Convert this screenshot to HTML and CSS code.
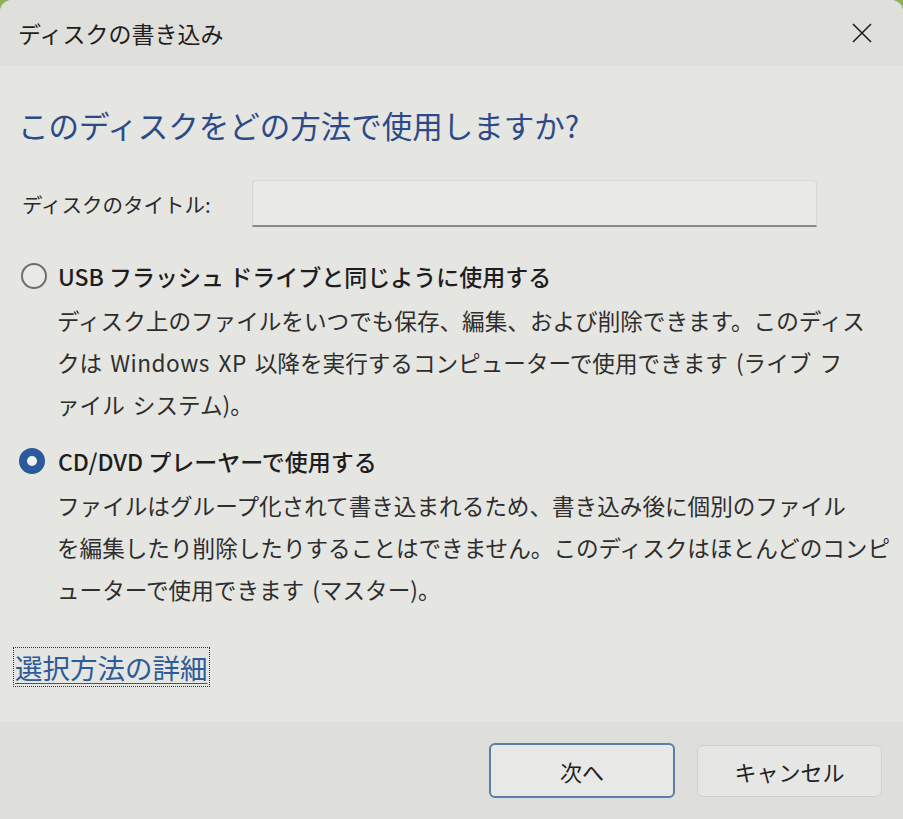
FILE: index.html
```html
<!DOCTYPE html>
<html lang="ja">
<head>
<meta charset="utf-8">
<title>ディスクの書き込み</title>
<link rel="stylesheet" href="styles.css">
</head>
<body>
<div class="window">
  <header class="titlebar">
    <span class="title">ディスクの書き込み</span>
    <span class="close" aria-label="閉じる">
      <svg width="22" height="22" viewBox="0 0 22 22"><path d="M2 2 L20 20 M20 2 L2 20" stroke="#1f1f1f" stroke-width="1.6" fill="none"/></svg>
    </span>
  </header>
  <main class="content">
    <h1 class="instruction">このディスクをどの方法で使用しますか?</h1>
    <div class="title-row">
      <label class="title-label">ディスクのタイトル:</label>
      <div class="title-input"></div>
    </div>
    <div class="option option-first">
      <span class="radio"></span>
      <div class="option-label">USB フラッシュ ドライブと同じように使用する</div>
      <p class="option-desc">ディスク上のファイルをいつでも保存、編集、および削除できます。このディス<br>クは <span class="latin">Windows XP</span> 以降を実行するコンピューターで使用できます (ライブ フ<br>ァイル システム)。</p>
    </div>
    <div class="option option-second">
      <span class="radio radio-checked"></span>
      <div class="option-label">CD/DVD プレーヤーで使用する</div>
      <p class="option-desc">ファイルはグループ化されて書き込まれるため、書き込み後に個別のファイル<br>を編集したり削除したりすることはできません。このディスクはほとんどのコンピ<br>ューターで使用できます (マスター)。</p>
    </div>
    <div class="link-row"><a class="more-link">選択方法の詳細</a></div>
  </main>
  <footer class="footer">
    <span class="btn btn-primary">次へ</span>
    <span class="btn">キャンセル</span>
  </footer>
</div>
</body>
</html>
```

FILE: styles.css
```css
html, body {
  margin: 0;
  padding: 0;
}
body {
  background: #8fae5e;
  font-family: "Noto Sans CJK JP", "Noto Sans", sans-serif;
  color: #262626;
}
.window {
  width: 903px;
  height: 819px;
  display: flex;
  flex-direction: column;
  background: #e5e5e2;
  border-radius: 12px 12px 0 0;
  overflow: hidden;
}
.titlebar {
  height: 66px;
  flex: none;
  display: flex;
  align-items: center;
  justify-content: space-between;
  padding: 0 30px 0 18px;
  background: #dfdfdb;
}
.title {
  font-size: 23px;
  line-height: 30px;
  color: #1f1f1f;
}
.close {
  display: flex;
  width: 22px;
  height: 22px;
}
.content {
  flex: 1;
  padding: 0 18px 0 18px;
}
.instruction {
  margin: 39px 0 0 0;
  font-size: 30.5px;
  line-height: 40px;
  font-weight: normal;
  color: #2c4a88;
}
.title-row {
  margin-top: 35px;
  display: flex;
  align-items: center;
  gap: 34px;
  padding-left: 4px;
}
.title-label {
  font-size: 20.5px;
  line-height: 46px;
  width: 196px;
  color: #2a2a2a;
}
.title-input {
  width: 563px;
  height: 44px;
  background: #e9e9e7;
  border: 1px solid #d6d6d2;
  border-bottom: 2px solid #8a8a88;
  border-radius: 4px 4px 0 0;
}
.option {
  display: grid;
  grid-template-columns: 26px 1fr;
  column-gap: 11px;
  padding-left: 3px;
}
.option-first { margin-top: 28px; }
.option-second { margin-top: 14px; }
.radio {
  grid-row: 1;
  grid-column: 1;
  align-self: center;
  width: 26px;
  height: 26px;
  box-sizing: border-box;
  border-radius: 50%;
  border: 2px solid #6e6e6c;
  background: #e9e9e7;
}
.radio-checked {
  border: 8px solid #2b5a9b;
  background: #f2f2f0;
  margin-left: -2px;
}
.option-label {
  grid-row: 1;
  grid-column: 2;
  font-size: 23px;
  line-height: 42px;
  font-weight: 500;
  color: #1e1e1e;
}
.option-desc {
  grid-row: 2;
  grid-column: 2;
  margin: 3px 0 0 -1px;
  font-size: 22.6px;
  line-height: 42px;
  color: #2e2e2e;
  white-space: nowrap;
  word-spacing: 3px;
}
.latin {
  letter-spacing: 0.5px;
}
.link-row {
  margin-top: 37px;
}
.more-link {
  display: inline-block;
  margin-left: -4px;
  font-size: 27.5px;
  line-height: 38px;
  color: #2d5a98;
  text-decoration: underline;
  text-decoration-thickness: 1px;
  text-underline-offset: 4px;
  outline: 1px dotted #333;
  padding: 0 1px;
}
.footer {
  height: 97px;
  flex: none;
  display: flex;
  align-items: center;
  justify-content: flex-end;
  gap: 22px;
  padding-right: 21px;
  background: #dededb;
}
.btn {
  width: 185px;
  height: 52px;
  box-sizing: border-box;
  display: flex;
  align-items: center;
  justify-content: center;
  font-size: 22px;
  color: #222;
  background: #e6e6e4;
  border: 1px solid #cfcfcb;
  border-radius: 6px;
}
.btn-primary {
  width: 186px;
  height: 55px;
  border: 2px solid #5a7ea6;
  background: #e8e8e6;
}
```
